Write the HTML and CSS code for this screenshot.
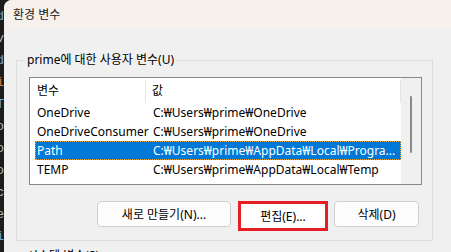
FILE: index.html
```html
<!DOCTYPE html>
<html lang="ko">
<head>
    <meta charset="UTF-8">
    <meta name="viewport" content="width=device-width, initial-scale=1.0">
    <title>환경 변수</title>
    <link rel="stylesheet" href="styles.css">
</head>
<body>
    <div class="desk-strip">
        <span class="c-blue">d</span>
        <span class="c-gray">v</span>
        <span class="c-blue">d</span>
        <span class="c-orange">i</span>
        <span class="c-blue">T</span>
        <span class="c-gray">o</span>
        <span class="c-gray">o</span>
        <span class="c-gray">o</span>
        <span class="c-gray">c</span>
        <span class="c-gray">e</span>
        <span class="c-blue">i</span>
    </div>

    <div class="window">
        <div class="titlebar">환경 변수</div>

        <fieldset class="group">
            <legend>prime에 대한 사용자 변수(U)</legend>

            <div class="listview">
                <div class="list-main">
                    <div class="list-header">
                        <div class="col-name">변수</div>
                        <div class="col-value">값</div>
                    </div>
                    <div class="row">
                        <div class="cell-name">OneDrive</div>
                        <div class="cell-value">C:₩Users₩prime₩OneDrive</div>
                    </div>
                    <div class="row">
                        <div class="cell-name">OneDriveConsumer</div>
                        <div class="cell-value">C:₩Users₩prime₩OneDrive</div>
                    </div>
                    <div class="row selected">
                        <div class="cell-name">Path</div>
                        <div class="cell-value">C:₩Users₩prime₩AppData₩Local₩Progra...</div>
                    </div>
                    <div class="row">
                        <div class="cell-name">TEMP</div>
                        <div class="cell-value">C:₩Users₩prime₩AppData₩Local₩Temp</div>
                    </div>
                </div>
                <div class="scrollbar">
                    <div class="thumb"></div>
                </div>
            </div>

            <div class="buttons">
                <button class="btn btn-wide">새로 만들기(N)...</button>
                <button class="btn btn-marked">편집(E)...</button>
                <button class="btn">삭제(D)</button>
            </div>
        </fieldset>

        <div class="next-label">시스템 변수(S)</div>
    </div>
</body>
</html>
```

FILE: styles.css
```css
body {
    margin: 0;
    height: 252px;
    overflow: hidden;
    display: flex;
    background-color: #1c1c1c;
    font-family: "Noto Sans", "Noto Sans CJK KR", sans-serif;
    font-size: 12px;
    color: #000;
}
.desk-strip {
    width: 4px;
    overflow: hidden;
    display: flex;
    flex-direction: column;
    align-items: flex-end;
    padding-top: 6px;
    font-family: "Liberation Mono", monospace;
    font-size: 13px;
    line-height: 22px;
}
.desk-strip span {
    width: 4px;
    overflow: hidden;
    direction: rtl;
}
.c-blue { color: #6fa8dc; }
.c-gray { color: #b8b8b8; }
.c-orange { color: #d08040; }

.window {
    flex: 1;
    background-color: #f0f0f0;
    border-top-left-radius: 8px;
    overflow: hidden;
}
.titlebar {
    height: 30px;
    line-height: 30px;
    padding-left: 9px;
    background-color: #f6f1ec;
    color: #1a1a1a;
}

.group {
    margin: 22px 18px 0 12px;
    padding: 9px 12px 9px 12px;
    border: 1px solid #dcdcdc;
    min-width: 0;
}
.group legend {
    margin-left: -4px;
    padding: 0 2px;
    line-height: 16px;
}

.listview {
    display: flex;
    width: 391px;
    height: 106px;
    border: 1px solid #828790;
    background-color: #fff;
}
.list-main {
    width: 371px;
    overflow: hidden;
}
.list-header {
    display: flex;
    height: 25px;
}
.col-name {
    width: 108px;
    padding-left: 7px;
    border-right: 1px solid #e5e5e5;
    margin-top: 2px;
    line-height: 22px;
    height: 23px;
}
.col-value {
    flex: 1;
    padding-left: 6px;
    border-right: 1px solid #e5e5e5;
    margin-top: 2px;
    line-height: 22px;
    height: 23px;
}
.row {
    display: flex;
    height: 19px;
    line-height: 19px;
    margin-left: 5px;
    box-sizing: border-box;
    white-space: nowrap;
}
.cell-name {
    width: 116px;
    padding-left: 2px;
}
.cell-value {
    flex: 1;
}
.row.selected {
    background-color: #0078d7;
    color: #fff;
    border: 1px dotted #e8a33a;
    line-height: 17px;
}
.row.selected .cell-name {
    padding-left: 1px;
}
.scrollbar {
    width: 20px;
    background-color: #f0f0f0;
    display: flex;
    justify-content: center;
}
.thumb {
    width: 2px;
    height: 57px;
    margin-top: 18px;
    border-radius: 1px;
    background-color: #8a8a8a;
}

.buttons {
    display: flex;
    justify-content: flex-end;
    align-items: flex-start;
    gap: 7px;
    margin-top: 16px;
    margin-right: 1px;
}
.btn {
    font-family: inherit;
    font-size: 12px;
    color: #000;
    width: 85px;
    height: 26px;
    padding: 0;
    background-color: #fdfdfd;
    border: 1px solid #d0d0d0;
    border-radius: 4px;
}
.btn-wide {
    width: 134px;
}
.btn-marked {
    width: 90px;
    height: 30px;
    border: 3px solid #e31e24;
    border-radius: 0;
    background-color: #fff;
    margin-right: -1px;
}

.next-label {
    margin: 7px 0 0 23px;
    line-height: 16px;
}
```
